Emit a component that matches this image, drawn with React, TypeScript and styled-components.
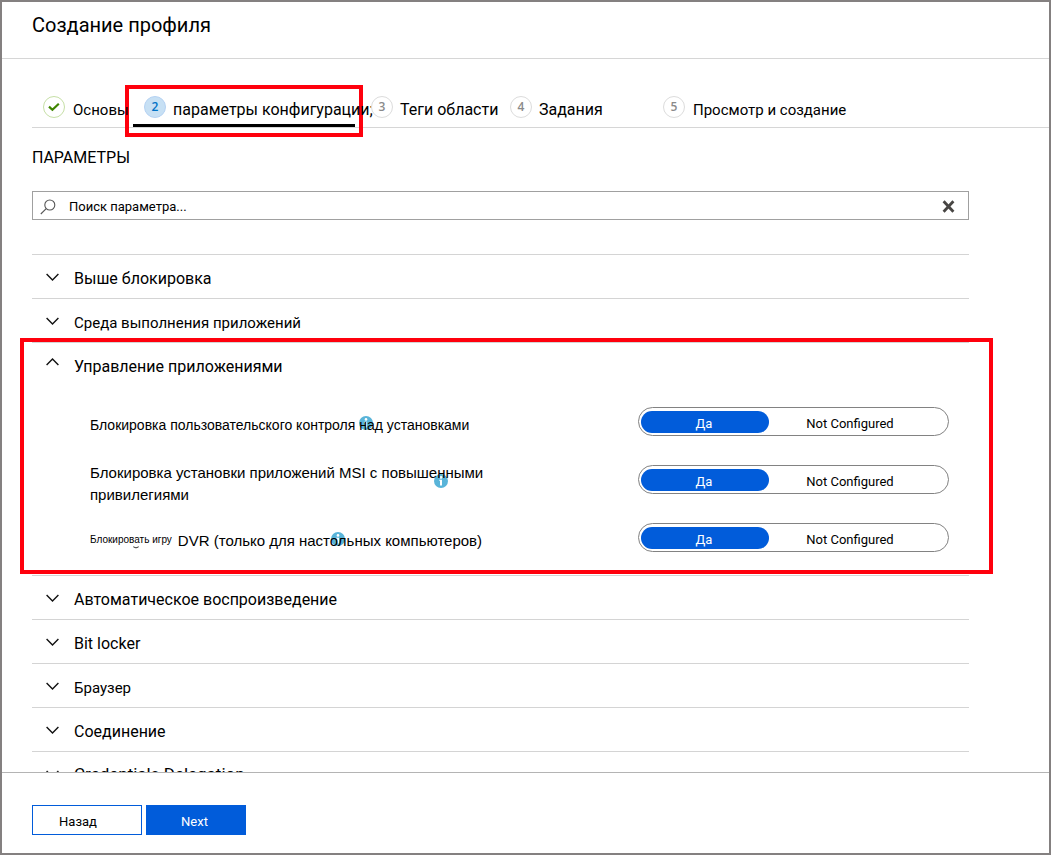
import React, { useState } from 'react';
import styled, { createGlobalStyle, css } from 'styled-components';

const GlobalStyle = createGlobalStyle`
  *, *::before, *::after { box-sizing: border-box; }
  body { margin: 0; background: #fff; }
  button, input { font: inherit; color: inherit; }
`;

const Frame = styled.div`
  display: flex;
  flex-direction: column;
  height: 100vh;
  min-height: 480px;
  border: 2px solid #848080;
  background: #fff;
  color: #000;
  font-family: Roboto, "Liberation Sans", sans-serif;
  font-size: 16px;
  line-height: 20px;
`;

const Header = styled.header`
  flex: none;
  height: 57px;
  padding: 11px 30px;
  border-bottom: 1px solid #d6d6d6;
`;

const Title = styled.h1`
  margin: 0;
  font-size: 20px;
  font-weight: 400;
  line-height: 24px;
`;

const Content = styled.main`
  flex: 1;
  min-height: 0;
  overflow: hidden;
  padding-left: 30px;
`;

const Steps = styled.ol`
  display: grid;
  grid-template-columns: 101px 227px 139px 153px 1fr;
  height: 69px;
  margin: 0;
  padding: 36px 0 0;
  border-bottom: 1px solid #d6d6d6;
  list-style: none;
`;

const redFrame = css`
  content: "";
  position: absolute;
  border: 4px solid #ff000d;
  pointer-events: none;
`;

const Step = styled.li<{ $current?: boolean }>`
  position: relative;
  padding-left: 11px;
  ${(p) => p.$current && css`
    &::before {
      ${redFrame}
      inset: -10px -3px -10px -8px;
    }
    &::after {
      content: "";
      position: absolute;
      inset: auto 5px 0 0;
      height: 3px;
      background: #000;
    }
  `}
`;

const StepLink = styled.a<{ $small?: boolean }>`
  position: relative;
  z-index: 1;
  display: flex;
  gap: ${(p) => (p.$small ? 8 : 7)}px;
  width: max-content;
  color: #000;
  font-size: ${(p) => (p.$small ? 15 : 16)}px;
  line-height: 20px;
  text-decoration: none;
  white-space: nowrap;
`;

const StepLabel = styled.span`
  padding-top: 5px;
`;

type StepState = 'done' | 'current' | 'todo';

const badgeColors = {
  done: { border: '#c6dfa6', fill: '#fff', text: '#3f8500' },
  current: { border: '#b5d2f3', fill: '#c7e0f4', text: '#0072c6' },
  todo: { border: '#dcdcdc', fill: '#fff', text: '#8a8a8a' },
};

const Badge = styled.span<{ $state: StepState }>`
  display: flex;
  align-items: center;
  justify-content: center;
  width: 22px;
  height: 22px;
  margin-top: 1px;
  border: 1px solid ${(p) => badgeColors[p.$state].border};
  border-radius: 50%;
  background: ${(p) => badgeColors[p.$state].fill};
  color: ${(p) => badgeColors[p.$state].text};
  font: 600 12px/20px "Open Sans", sans-serif;
`;

const Body = styled.div`
  padding-right: 80px;
`;

const SectionTitle = styled.h2`
  margin: 0;
  padding: 20px 0 23px;
  font-size: 16px;
  font-weight: 400;
  line-height: 20px;
`;

const SearchBox = styled.div`
  display: flex;
  align-items: center;
  height: 29px;
  margin-bottom: 34px;
  padding: 2px 13px 0 7px;
  border: 1px solid #a0a0a0;
`;

const SearchInput = styled.input`
  flex: 1;
  min-width: 0;
  height: 25px;
  padding: 0;
  margin-left: 13px;
  border: 0;
  outline: 0;
  background: none;
  font-size: 13px;
  &::placeholder { color: #000; opacity: 1; }
`;

const IconButton = styled.button`
  display: flex;
  padding: 0;
  border: 0;
  background: none;
  cursor: pointer;
`;

const Category = styled.section<{ $highlighted?: boolean }>`
  position: relative;
  border-top: 1px solid #d4d4d4;
  ${(p) => p.$highlighted && css`
    padding-bottom: 11px;
    &::after {
      ${redFrame}
      inset: -5px -24px 1px -12px;
    }
  `}
`;

const CategoryHeader = styled.button<{ $size?: number }>`
  display: flex;
  align-items: flex-start;
  gap: 15px;
  width: 100%;
  height: 43px;
  padding: 12px 0 0 14px;
  border: 0;
  background: none;
  font-size: ${(p) => p.$size ?? 16}px;
  line-height: 20px;
  text-align: left;
  cursor: pointer;
`;

const CategoryLabel = styled.span<{ $raised?: boolean }>`
  padding-top: ${(p) => (p.$raised ? 0 : 2)}px;
`;

const ChevronIcon = styled.svg<{ $up?: boolean }>`
  flex: none;
  width: 13px;
  height: 10px;
  margin-top: ${(p) => (p.$up ? 2 : 5)}px;
  fill: none;
  stroke: #111;
  stroke-width: 1.4;
`;

const Settings = styled.div`
  display: flex;
  flex-direction: column;
  gap: 14px;
  padding-top: 18px;
`;

const Setting = styled.fieldset`
  display: flex;
  align-items: flex-start;
  justify-content: space-between;
  height: 44px;
  margin: 0;
  padding: 0 20px 0 58px;
  border: 0;
  font-family: "Liberation Sans", Arial, sans-serif;
`;

const SettingLabel = styled.div<{ $size: number; $two?: boolean }>`
  position: relative;
  width: 410px;
  padding-top: ${(p) => (p.$two ? 0 : 10)}px;
  font-size: ${(p) => p.$size}px;
  line-height: 22px;
  isolation: isolate;
`;

const SmallText = styled.span`
  display: inline-block;
  margin-right: 6px;
  font-size: 10px;
  vertical-align: 3px;
  line-height: 12px;
`;

const InfoIcon = styled.svg<{ $x: number }>`
  position: absolute;
  z-index: -1;
  left: ${(p) => p.$x}px;
  top: 12px;
  width: 14px;
  height: 14px;
`;

const TailMark = styled.svg`
  position: absolute;
  left: 43px;
  top: 26px;
  width: 6px;
  height: 3px;
`;

const Toggle = styled.div`
  display: flex;
  width: 311px;
  height: 29px;
  margin-top: 3px;
  padding: 3px 2px;
  border: 1px solid #828282;
  border-radius: 15px;
`;

const Option = styled.label<{ $wide?: boolean }>`
  position: relative;
  display: flex;
  justify-content: center;
  width: ${(p) => (p.$wide ? 164 : 128)}px;
  height: 22px;
  padding: 2px 2px 0 0;
  border-radius: 11px;
  font-family: Roboto, sans-serif;
  font-size: 13px;
  line-height: 22px;
  cursor: pointer;
  &:has(input:checked) {
    background: #015cda;
    color: #fff;
  }
`;

const Radio = styled.input`
  position: absolute;
  inset: 0;
  margin: 0;
  opacity: 0;
`;

const Footer = styled.footer`
  flex: none;
  display: flex;
  gap: 4px;
  height: 81px;
  padding: 32px 30px 0;
  border-top: 1px solid #b4b4b4;
`;

const ActionButton = styled.button<{ $primary?: boolean }>`
  width: ${(p) => (p.$primary ? 100 : 110)}px;
  height: 30px;
  padding: 3px ${(p) => (p.$primary ? 3 : 18)}px 0 0;
  border: 1px solid #015cda;
  background: ${(p) => (p.$primary ? '#015cda' : '#fff')};
  color: ${(p) => (p.$primary ? '#fff' : '#000')};
  font-size: 13px;
  cursor: pointer;
`;

const steps: { label: string; state: StepState; small?: boolean }[] = [
  { label: 'Основы', state: 'done', small: true },
  { label: 'параметры конфигурации;', state: 'current' },
  { label: 'Теги области', state: 'todo' },
  { label: 'Задания', state: 'todo' },
  { label: 'Просмотр и создание', state: 'todo', small: true },
];

function Check() {
  return (
    <svg width="12" height="10" viewBox="0 0 12 10" fill="none" stroke="#3f8500" strokeWidth="2.2" aria-hidden="true">
      <path d="M1 4.6 L4.4 7.8 L10.8 1.8" />
    </svg>
  );
}

function Chevron({ up }: { up?: boolean }) {
  return (
    <ChevronIcon $up={up} viewBox="0 0 13 10" aria-hidden="true">
      <path d={up ? 'M0.6 8 L6.5 2 L12.4 8' : 'M0.6 2 L6.5 8 L12.4 2'} />
    </ChevronIcon>
  );
}

function Info({ x }: { x: number }) {
  return (
    <InfoIcon $x={x} viewBox="0 0 14 14" aria-hidden="true">
      <circle cx="7" cy="7" r="7" fill="#59b4d9" />
      <circle cx="7" cy="3.4" r="1.3" fill="#fff" />
      <path d="M5.2 5.8 H8 V11.5 H6 V6.8 H5.2 Z" fill="#fff" />
    </InfoIcon>
  );
}

function SettingToggle({ name, labelId }: { name: string; labelId: string }) {
  const [on, setOn] = useState(true);
  return (
    <Toggle role="radiogroup" aria-labelledby={labelId}>
      <Option>
        <Radio type="radio" name={name} checked={on} onChange={() => setOn(true)} />
        Да
      </Option>
      <Option $wide>
        <Radio type="radio" name={name} checked={!on} onChange={() => setOn(false)} />
        Not Configured
      </Option>
    </Toggle>
  );
}

function CollapsedCategory({ label, size, raised }: { label: string; size?: number; raised?: boolean }) {
  return (
    <Category>
      <CategoryHeader type="button" $size={size} aria-expanded="false">
        <Chevron />
        <CategoryLabel $raised={raised}>{label}</CategoryLabel>
      </CategoryHeader>
    </Category>
  );
}

export default function App() {
  const [query, setQuery] = useState('');
  return (
    <>
      <GlobalStyle />
      <Frame>
        <Header>
          <Title>Создание профиля</Title>
        </Header>
        <Content>
          <Steps>
            {steps.map((s, i) => (
              <Step key={s.label} $current={s.state === 'current'}>
                <StepLink href="#" $small={s.small}>
                  <Badge $state={s.state}>{s.state === 'done' ? <Check /> : i + 1}</Badge>
                  <StepLabel>{s.label}</StepLabel>
                </StepLink>
              </Step>
            ))}
          </Steps>
          <Body>
            <SectionTitle>ПАРАМЕТРЫ</SectionTitle>
            <SearchBox>
              <svg width="16" height="16" viewBox="0 0 16 16" fill="none" stroke="#555" strokeWidth="1.1" aria-hidden="true">
                <circle cx="9.8" cy="6" r="5" />
                <path d="M6.2 9.6 L0.8 15" />
              </svg>
              <SearchInput
                type="text"
                aria-label="Поиск параметра"
                placeholder="Поиск параметра..."
                value={query}
                onChange={(e) => setQuery(e.target.value)}
              />
              <IconButton type="button" aria-label="Очистить" onClick={() => setQuery('')}>
                <svg width="13" height="13" viewBox="0 0 13 13" fill="none" stroke="#484644" strokeWidth="2.8">
                  <path d="M1.6 1.2 L11.4 11.8 M11.4 1.2 L1.6 11.8" />
                </svg>
              </IconButton>
            </SearchBox>

            <CollapsedCategory label="Выше блокировка" />
            <CollapsedCategory label="Среда выполнения приложений" size={15} />
            <Category $highlighted>
              <CategoryHeader type="button" aria-expanded="true">
                <Chevron up />
                <CategoryLabel>Управление приложениями</CategoryLabel>
              </CategoryHeader>
              <Settings>
                <Setting>
                  <SettingLabel id="install-control" $size={14}>
                    Блокировка пользовательского контроля над установками
                    <Info x={269} />
                  </SettingLabel>
                  <SettingToggle name="install-control" labelId="install-control" />
                </Setting>
                <Setting>
                  <SettingLabel id="msi-install" $size={15} $two>
                    Блокировка установки приложений MSI с повышенными привилегиями
                    <Info x={344} />
                  </SettingLabel>
                  <SettingToggle name="msi-install" labelId="msi-install" />
                </Setting>
                <Setting>
                  <SettingLabel id="game-dvr" $size={15}>
                    <SmallText>Блокировать игру</SmallText>
                    DVR (только для настольных компьютеров)
                    <TailMark viewBox="0 0 6 3" fill="none" stroke="#333" aria-hidden="true">
                      <path d="M0.3 0.8 Q3 3 5.7 0.8" />
                    </TailMark>
                    <Info x={241} />
                  </SettingLabel>
                  <SettingToggle name="game-dvr" labelId="game-dvr" />
                </Setting>
              </Settings>
            </Category>
            <CollapsedCategory label="Автоматическое воспроизведение" />
            <CollapsedCategory label="Bit locker" />
            <CollapsedCategory label="Браузер" size={15} />
            <CollapsedCategory label="Соединение" />
            <CollapsedCategory label="Credentials Delegation" size={17} raised />
          </Body>
        </Content>
        <Footer>
          <ActionButton type="button">Назад</ActionButton>
          <ActionButton type="button" $primary>Next</ActionButton>
        </Footer>
      </Frame>
    </>
  );
}
